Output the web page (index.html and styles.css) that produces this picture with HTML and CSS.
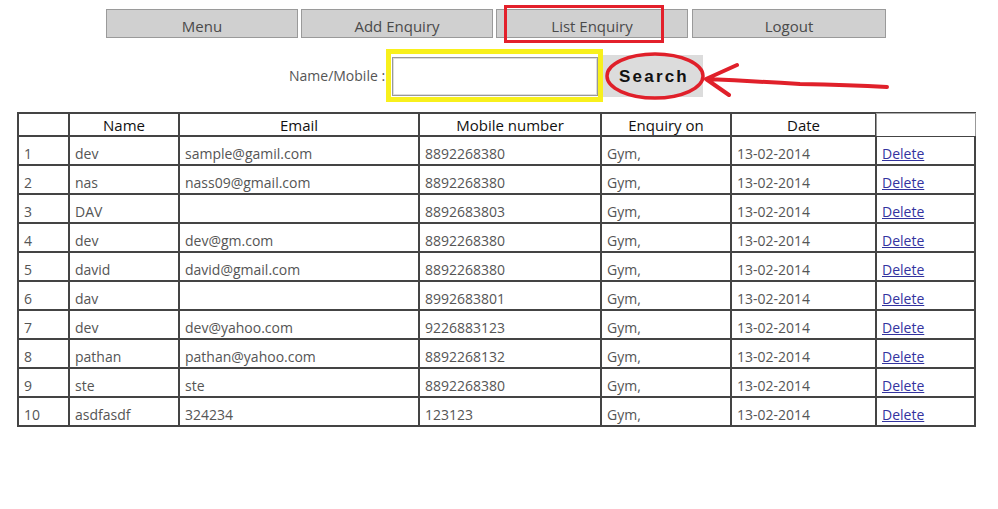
FILE: index.html
```html
<!DOCTYPE html>
<html>
<head>
<meta charset="utf-8">
<link rel="stylesheet" href="styles.css">
</head>
<body>
<div class="nav">
  <a class="nav-btn">Menu</a>
  <a class="nav-btn">Add Enquiry</a>
  <a class="nav-btn current">List Enquiry<span class="mark-red"></span></a>
  <a class="nav-btn last">Logout</a>
</div>
<div class="search-row">
  <label class="search-label">Name/Mobile :</label>
  <div class="hl-yellow"><input class="search-input" type="text"></div>
  <button class="search-btn">Search</button>
  <svg class="annot" width="300" height="60" viewBox="0 0 300 60">
    <ellipse cx="55" cy="25" rx="48" ry="22" fill="none" stroke="#e0202a" stroke-width="3.5"/>
    <path d="M106 28 L137 14 M106 28 L129 44 M106 28 Q150 30 200 33 Q250 34 287 36" fill="none" stroke="#e0202a" stroke-width="4" stroke-linecap="round"/>
  </svg>
</div>
<table class="list">
  <thead>
    <tr><th class="c1"></th><th class="c2">Name</th><th class="c3">Email</th><th class="c4">Mobile number</th><th class="c5">Enquiry on</th><th class="c6">Date</th><th class="c7 blank"></th></tr>
  </thead>
  <tbody>
    <tr><td>1</td><td>dev</td><td>sample@gamil.com</td><td>8892268380</td><td>Gym,</td><td>13-02-2014</td><td><a href="#">Delete</a></td></tr>
    <tr><td>2</td><td>nas</td><td>nass09@gmail.com</td><td>8892268380</td><td>Gym,</td><td>13-02-2014</td><td><a href="#">Delete</a></td></tr>
    <tr><td>3</td><td>DAV</td><td></td><td>8892683803</td><td>Gym,</td><td>13-02-2014</td><td><a href="#">Delete</a></td></tr>
    <tr><td>4</td><td>dev</td><td>dev@gm.com</td><td>8892268380</td><td>Gym,</td><td>13-02-2014</td><td><a href="#">Delete</a></td></tr>
    <tr><td>5</td><td>david</td><td>david@gmail.com</td><td>8892268380</td><td>Gym,</td><td>13-02-2014</td><td><a href="#">Delete</a></td></tr>
    <tr><td>6</td><td>dav</td><td></td><td>8992683801</td><td>Gym,</td><td>13-02-2014</td><td><a href="#">Delete</a></td></tr>
    <tr><td>7</td><td>dev</td><td>dev@yahoo.com</td><td>9226883123</td><td>Gym,</td><td>13-02-2014</td><td><a href="#">Delete</a></td></tr>
    <tr><td>8</td><td>pathan</td><td>pathan@yahoo.com</td><td>8892268132</td><td>Gym,</td><td>13-02-2014</td><td><a href="#">Delete</a></td></tr>
    <tr><td>9</td><td>ste</td><td>ste</td><td>8892268380</td><td>Gym,</td><td>13-02-2014</td><td><a href="#">Delete</a></td></tr>
    <tr><td>10</td><td>asdfasdf</td><td>324234</td><td>123123</td><td>Gym,</td><td>13-02-2014</td><td><a href="#">Delete</a></td></tr>
  </tbody>
</table>
</body>
</html>
```
FILE: styles.css
```css
html, body {
  margin: 0;
  padding: 0;
  background: #fff;
}
body {
  font-family: "Open Sans", "Noto Sans", sans-serif;
  color: #444;
}
.nav {
  display: flex;
  gap: 3px;
  padding: 9px 0 0 106px;
}
.nav-btn {
  position: relative;
  box-sizing: border-box;
  width: 192px;
  height: 29px;
  background: #d0d0d0;
  border: 1px solid #9a9a9a;
  display: flex;
  align-items: flex-end;
  justify-content: center;
  padding-bottom: 1px;
  font-size: 15px;
  color: #4a4a4a;
  line-height: 20px;
}
.nav-btn.last { width: 194px; margin-left: 1px; }
.mark-red {
  position: absolute;
  left: 7px;
  top: -5px;
  width: 154px;
  height: 32px;
  border: 3px solid #e3202b;
}
.search-row {
  position: relative;
  display: flex;
  align-items: center;
  padding-left: 289px;
  margin-top: 11px;
  height: 53px;
}
.search-label {
  font-size: 14px;
  color: #555;
  width: 97px;
  flex: none;
  white-space: nowrap;
  position: relative;
  z-index: 1;
}
.hl-yellow {
  box-sizing: border-box;
  flex: none;
  width: 217px;
  height: 53px;
  border: 5px solid #f8f01c;
  padding: 3px 0 0 1px;
  background: #fff;
}
.search-input {
  box-sizing: border-box;
  display: block;
  width: 206px;
  height: 39px;
  border: 1px solid #999;
  box-shadow: inset 0 0 0 1px #ddd;
  margin: 0;
  padding: 0;
}
.search-btn {
  box-sizing: border-box;
  flex: none;
  width: 100px;
  height: 42px;
  margin-top: 1px;
  background: #dcdcdc;
  border: 0;
  font-family: "Liberation Sans", Arial, sans-serif;
  font-weight: bold;
  font-size: 17px;
  letter-spacing: 2.2px;
  color: #111;
  padding: 2px 0 0 2px;
}
.annot {
  position: absolute;
  left: 600px;
  top: 2px;
  overflow: visible;
}
.list {
  margin: 10px 0 0 17px;
  border-collapse: separate;
  border-spacing: 0;
  border: 1px solid #444;
  border-right: 0;
  table-layout: fixed;
  width: 858px;
}
.list th, .list td {
  border: 1px solid #444;
  padding: 0 5px;
  box-sizing: border-box;
}
.list th {
  height: 23px;
  font-weight: normal;
  color: #111;
  font-size: 15px;
  text-align: center;
  line-height: 20px;
  padding-top: 0;
}
.list td {
  height: 29px;
  font-size: 14px;
  color: #555;
  vertical-align: bottom;
  padding-bottom: 0;
  line-height: 20px;
}
.list th.c1 { width: 51px; }
.list th.c2 { width: 110px; }
.list th.c3 { width: 240px; }
.list th.c4 { width: 182px; }
.list th.c5 { width: 130px; }
.list th.c6 { width: 145px; }
.list th.c7 { width: 100px; }
.list th.blank {
  border: 1px solid #999;
  border-bottom: 0;
  border-top-color: #aaa;
}
.list td:last-child { border-right: 2px solid #444; }
.list td a {
  color: #33339f;
  text-decoration: underline;
}
```
